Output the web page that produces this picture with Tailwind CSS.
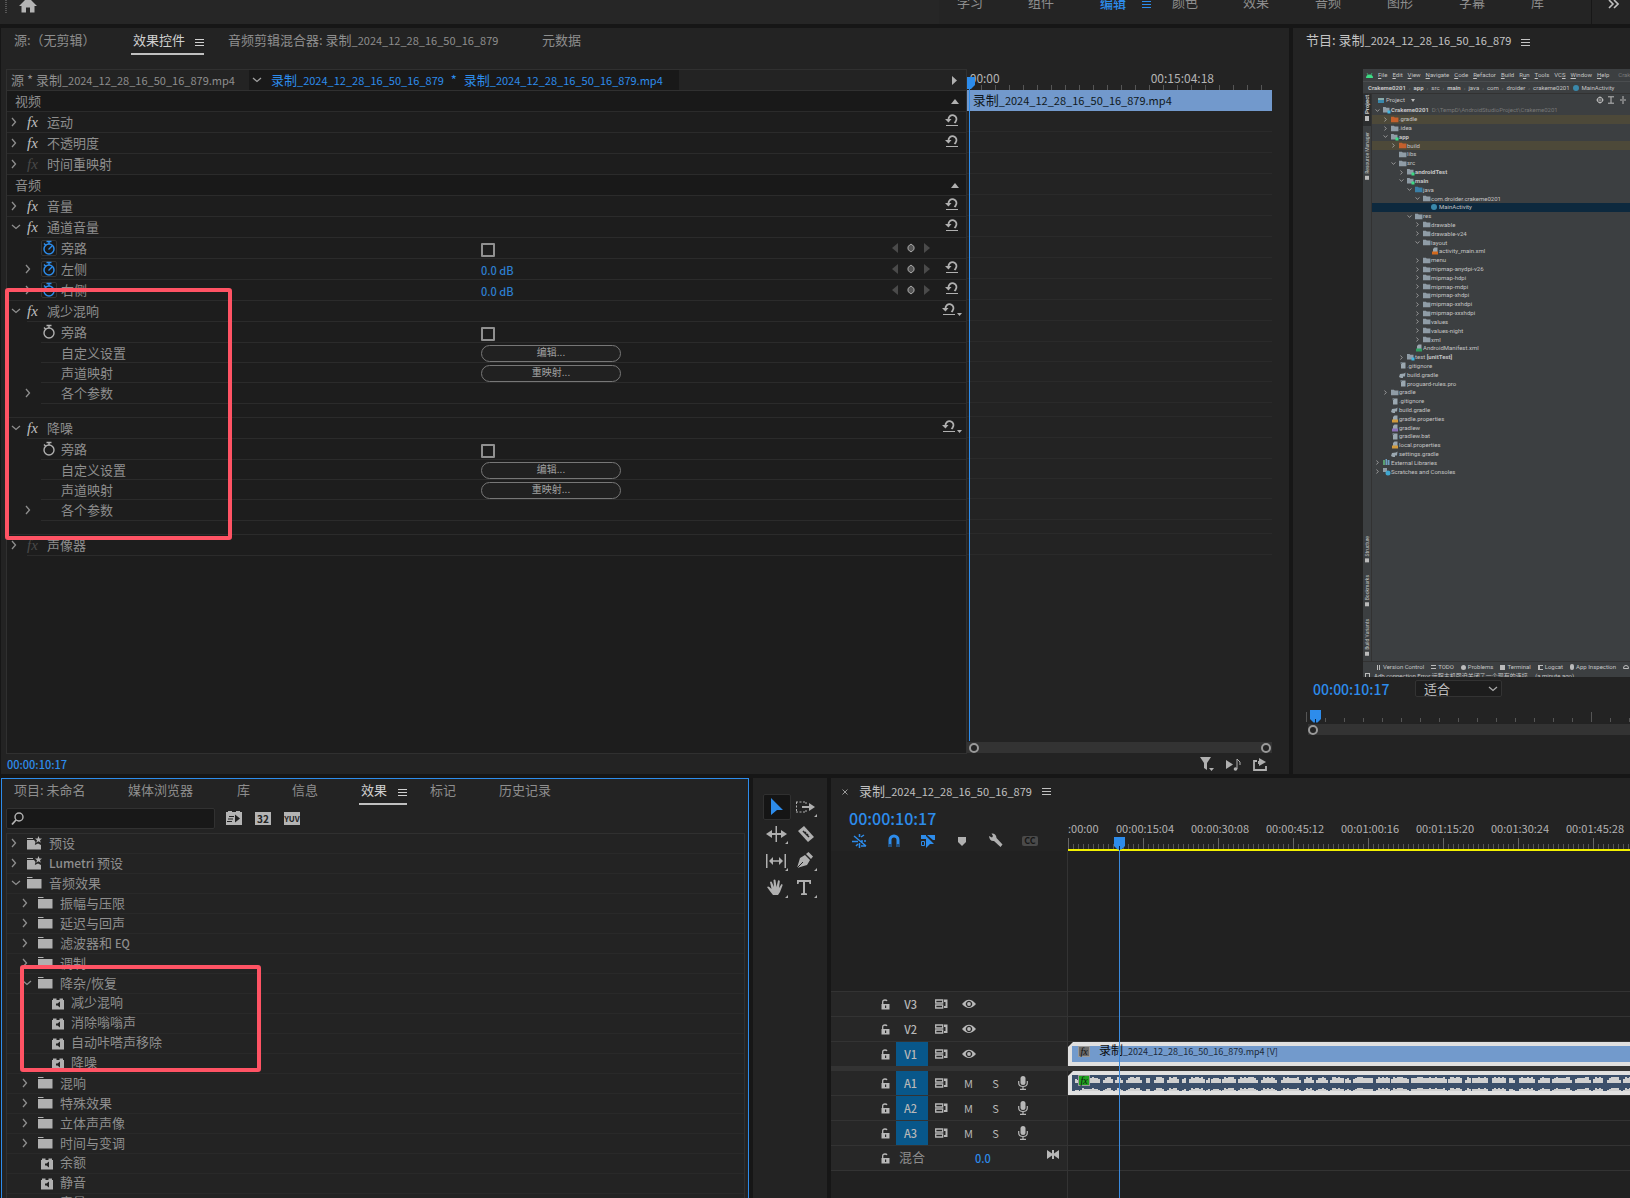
<!DOCTYPE html>
<html lang="zh-CN">
<head>
<meta charset="utf-8">
<title>录制_2024_12_28_16_50_16_879</title>
<script src="https://cdn.jsdelivr.net/npm/@tailwindcss/browser@4"></script>
</head>
<body class="h-screen overflow-hidden bg-[#161616] font-['Noto_Sans_CJK_SC',sans-serif] text-[13px] leading-[18px] text-[#8e8e8e]">
<svg class="hidden">
  <symbol id="menu" viewBox="0 0 9 9"><path d="M0 1.500h9M0 4.500h9M0 7.500h9" stroke="currentColor" fill="none"/></symbol>
  <symbol id="right" viewBox="0 0 8 10"><path d="M2 1l3.500 4L2 9" stroke="currentColor" stroke-width="1.300" fill="none"/></symbol>
  <symbol id="down" viewBox="0 0 10 8"><path d="M1 2l4 3.500L9 2" stroke="currentColor" stroke-width="1.300" fill="none"/></symbol>
  <symbol id="reset" viewBox="0 0 14 14"><path d="M3.500 6.500A4 4 0 1 1 10.500 8.800L9.500 10" stroke="currentColor" stroke-width="1.800" fill="none"/><path d="M0 6h6.500L3.500 9.500zM1 12h12v1H1z" fill="currentColor"/></symbol>
  <symbol id="watch" viewBox="0 0 14 16"><circle cx="7" cy="9" r="5" stroke="currentColor" stroke-width="1.400" fill="none"/><path d="M4.500 1.500h5M7 1.500V4M2 3.500l2 2" stroke="currentColor" stroke-width="1.400" fill="none"/></symbol>
  <symbol id="watchon" viewBox="0 0 14 16"><circle cx="7" cy="9" r="5" stroke="currentColor" stroke-width="1.500" fill="none"/><path d="M4.500 1.500h5M7 1.500V4M2 3.500l2 2M6.500 9.500l3.500-3.500" stroke="currentColor" stroke-width="1.400" fill="none"/></symbol>
  <symbol id="folder" viewBox="0 0 15 13"><path d="M0 1h5.500v1H0zM0 3h14.500v9.500H0z" fill="#b0b0b0"/></symbol>
  <symbol id="star" viewBox="0 0 15 14"><path d="M0 2h6v1H0zM0 4h7l1.500 2-.7 3L11 7.500 14 9v4.500H0z" fill="#b0b0b0"/><path d="M11.500 0l1 2.500h2.500l-2 1.700.8 2.600-2.300-1.500-2.300 1.500.8-2.600-2-1.700h2.500z" fill="#b0b0b0"/></symbol>
  <symbol id="plug" viewBox="0 0 12 12"><path d="M0 2h1V.5h3.500V2h3V.5H11V2h1v9.500H0z" fill="#b0b0b0"/><path d="M8 3.500v6L5.500 7.500H4v-2h1.500z" fill="#222"/></symbol>
  <symbol id="lock" viewBox="0 0 9 11"><path d="M1.700 5V3q0-2 2.300-2 1.500 0 2 1" stroke="currentColor" stroke-width="1.300" fill="none"/><path fill-rule="evenodd" d="M.5 5h8v5.500h-8zM4 6.500v2.500h1.200V6.500z" fill="currentColor"/></symbol>
  <symbol id="sync" viewBox="0 0 13 10"><path d="M.7 1h7v3h-7zM.7 6h7v3h-7z" stroke="currentColor" stroke-width="1.300" fill="none"/><path d="M9 .5h3.500v8.500H9V7h1.500V3H9z" fill="currentColor"/></symbol>
  <symbol id="eye" viewBox="0 0 14 10"><path fill-rule="evenodd" d="M0 5Q7-3.500 14 5 7 13 0 5zM7 1.800a3.200 3.200 0 1 0 .01 0z" fill="currentColor"/><circle cx="7" cy="5" r="1.900" fill="currentColor"/></symbol>
  <symbol id="mic" viewBox="0 0 10 14"><rect x="2.500" y="0" width="5" height="9" rx="2.500" fill="currentColor"/><path d="M.7 5v2q0 3.500 4.300 3.500T9.300 7V5M5 10v3M2 13.300h6" stroke="currentColor" stroke-width="1.200" fill="none"/></symbol>
  <symbol id="head" viewBox="0 0 11 13"><path d="M0 0h11v9l-3.500 3.500h-4L0 9z" fill="#2d8ceb"/><path d="M5 9h1v4H5z" fill="#0b1f38"/></symbol>
  <symbol id="ifolder" viewBox="0 0 7 6"><path d="M0 .5h2.500l.8.800H6.500V5.500H0z" fill="currentColor"/></symbol>
  <symbol id="ifile" viewBox="0 0 7 7"><path d="M3 .5h3v6H1.500V2z" fill="#9aa7b0"/><path d="M1 0l2.500 0L1 2.500z" fill="#6e7a83"/></symbol>
</svg>

<div class="grid h-full grid-cols-1 grid-rows-[24px_minmax(0,746fr)_minmax(0,420fr)] gap-1">

  <header class="flex items-start justify-between overflow-hidden bg-[#262626]">
    <div class="flex gap-3 pl-[5px]">
      <div class="h-[13px] w-[2px] bg-[repeating-linear-gradient(#555_0_1px,#262626_1px_2px)]"></div>
      <button aria-label="主页" class="h-[13px]"><svg width="18" height="13" viewBox="0 0 18 13" fill="#b4b4b4"><path d="M0 6L8-2h2l8 8h-2.500v6.500H11V7.500H7v5H2.500V6z"/></svg></button>
    </div>
    <nav class="flex h-6 bg-[#242424]">
      <div class="-mt-[7px] flex h-[19px] pl-[18px]">
        <a href="#" class="w-[71px]">学习</a>
        <a href="#" class="w-[72px]">组件</a>
        <a href="#" class="flex w-[72px] items-center gap-4 font-medium text-[#2d8ceb]">编辑<svg class="mt-1" width="9" height="9"><use href="#menu"/></svg></a>
        <a href="#" class="w-[71px]">颜色</a>
        <a href="#" class="w-[72px]">效果</a>
        <a href="#" class="w-[72px]">音频</a>
        <a href="#" class="w-[72px]">图形</a>
        <a href="#" class="w-[72px]">字幕</a>
        <a href="#" class="w-[60px]">库</a>
      </div>
      <button aria-label="更多工作区" class="flex w-[39px] items-start border-l border-[#171717] pl-4"><svg width="11" height="9" viewBox="0 0 11 9"><path d="M1 0l4 4-4 4M6 0l4 4-4 4" fill="none" stroke="#c0c0c0" stroke-width="1.600"/></svg></button>
    </nav>
  </header>

  <div class="flex min-h-0 min-w-0 gap-1 pl-px">
    <section class="flex min-w-0 flex-[1288] flex-col bg-[#232323]">
      <div class="flex h-[41px] shrink-0 pt-[3px] pl-[13px] text-[13px]">
        <div class="w-[117px]">源:（无剪辑）</div>
        <div class="mr-[24px] flex h-[24px] w-[73px] items-start justify-between border-b-2 border-[#c0c0c0] pl-[2px] text-[#d0d0d0]">效果控件<svg class="mt-[7px]" width="9" height="9"><use href="#menu"/></svg></div>
        <div class="w-[314px]">音频剪辑混合器: 录制<span class="text-[11px]">_2024_12_28_16_50_16_879</span></div>
        <div>元数据</div>
      </div>
      <div class="relative flex min-h-0 flex-1">
        <div class="ml-[5px] flex min-w-0 flex-[961] flex-col border border-[#303030] bg-[#1d1d1d]">
          <div class="flex h-[21px] shrink-0 items-center justify-between border-b border-[#303030] bg-[#232323] pr-2">
            <div class="flex h-full items-center">
              <span class="w-[242px] pl-1">源 * 录制<span class="text-[11px]">_2024_12_28_16_50_16_879.mp4</span></span>
              <div class="flex h-full w-[430px] items-center bg-[#191919] text-[#2d8ceb]"><svg class="mr-[9px] ml-[3px] text-[#a0a0a0]" width="10" height="8"><use href="#down"/></svg><span>录制<span class="text-[11px]">_2024_12_28_16_50_16_879</span><span class="mx-1"> * </span>录制<span class="text-[11px]">_2024_12_28_16_50_16_879.mp4</span></span></div>
            </div>
            <svg width="6" height="9"><path d="M0 0l5 4.500L0 9z" fill="#b0b0b0"/></svg>
          </div>
          <div id="effects"></div>
        </div>
        <div class="relative mr-[17px] flex min-w-0 flex-[306] flex-col">
          <div class="relative h-[21px] shrink-0 overflow-hidden text-[12px] leading-[18px] text-[#b4b4b4]">
            <div class="flex justify-between pr-[58px] pl-[3px]"><span>00:00</span><span>00:15:04:18</span></div>
            <div class="absolute inset-x-0 bottom-0 ml-[14px] h-[5px] bg-[repeating-linear-gradient(90deg,#555_0_1px,transparent_1px_14px)]"></div>
          </div>
          <div class="h-[21px] shrink-0 bg-[#7299cc] pl-[6px] leading-5 text-[#101820]">录制<span class="text-[11px]">_2024_12_28_16_50_16_879.mp4</span></div>
          <div id="lanes" class="flex-1"></div>
          <div class="mb-px flex h-[11px] shrink-0 items-center justify-between bg-[#333] pr-px pl-[2px]">
            <span class="size-[10px] rounded-full border-2 border-[#999] bg-[#232323]"></span><span class="size-[10px] rounded-full border-2 border-[#999] bg-[#232323]"></span>
          </div>
          <svg class="absolute top-[8px] left-0" width="8" height="13"><path d="M0 0h8v8l-4 4H0z" fill="#2d8ceb"/></svg>
          <div class="absolute top-[20px] bottom-[13px] left-[2px] w-px bg-[#2d8ceb]"></div>
        </div>
      </div>
      <footer class="flex h-[20px] shrink-0 items-center justify-between pr-[21px] pl-[6px]">
        <span class="text-[11px] font-medium text-[#2d8ceb]">00:00:10:17</span>
        <div class="flex items-center gap-3 text-[#b0b0b0]">
          <button aria-label="筛选"><svg width="14" height="14" viewBox="0 0 14 14" fill="currentColor"><path d="M0 0h11L7 6v7L4 11V6zM9 11h5l-2.500 3z"/></svg></button>
          <button aria-label="播放音频"><svg width="15" height="13" viewBox="0 0 15 13" fill="currentColor"><path d="M0 2l7 4.500L0 11z"/><path d="M11 11V1l3 3v3" fill="none" stroke="currentColor"/><circle cx="9.500" cy="11" r="1.800"/></svg></button>
          <button aria-label="导出"><svg width="15" height="13" viewBox="0 0 15 13" fill="currentColor"><path d="M4 3H1v9h12V8" fill="none" stroke="currentColor" stroke-width="1.800"/><path d="M6 0l7 4-7 4zM5 3h3v3H5z"/></svg></button>
        </div>
      </footer>
    </section>

    <section class="flex min-w-0 flex-[337] flex-col overflow-hidden bg-[#232323]">
      <div class="flex h-[41px] shrink-0 items-start gap-[10px] pt-[3px] pl-[13px] text-[#c4c4c4]"><span>节目: 录制<span class="text-[11px]">_2024_12_28_16_50_16_879</span></span><svg class="mt-[7px]" width="9" height="9"><use href="#menu"/></svg></div>
      <div class="ml-[70px] flex min-h-0 flex-1 flex-col overflow-hidden bg-[#3c3f41] font-[Roboto,'Noto_Sans_CJK_SC',sans-serif] text-[6px] leading-[8px] whitespace-nowrap text-[#c4c4c4]">
        <div class="flex h-[13px] shrink-0 items-center gap-[5px] border-b border-[#4a4d4f] pl-[3px]">
          <svg class="shrink-0" width="7" height="5" viewBox="0 0 7 5"><path d="M0 5Q0 1.500 3.500 1.500T7 5z" fill="#3ddc84"/><path d="M1 0l1 2M6 0L5 2" stroke="#3ddc84" stroke-width=".6"/></svg>
          <span><u>F</u>ile</span><span><u>E</u>dit</span><span><u>V</u>iew</span><span><u>N</u>avigate</span><span><u>C</u>ode</span><span><u>R</u>efactor</span><span><u>B</u>uild</span><span>R<u>u</u>n</span><span><u>T</u>ools</span><span>VC<u>S</u></span><span><u>W</u>indow</span><span><u>H</u>elp</span><span class="ml-1 text-[#777]">Crakeme0201</span>
        </div>
        <div class="flex h-[12px] shrink-0 items-center gap-[3px] border-b border-[#323232] pl-[5px]">
          <b>Crakeme0201</b><i class="text-[#777]">›</i><b>app</b><i class="text-[#777]">›</i><span>src</span><i class="text-[#777]">›</i><b>main</b><i class="text-[#777]">›</i><span>java</span><i class="text-[#777]">›</i><span>com</span><i class="text-[#777]">›</i><span>droider</span><i class="text-[#777]">›</i><span>crakeme0201</span><span class="size-[6px] shrink-0 rounded-full bg-[#3a88aa]"></span><span>MainActivity</span>
        </div>
        <div class="flex min-h-0 flex-1">
          <div class="flex w-[9px] shrink-0 flex-col items-center border-r border-[#323232] text-[5px]">
            <div class="flex h-[32px] w-full rotate-180 items-center gap-[2px] bg-[#2b2d2e] pt-[5px] text-[6px] [writing-mode:vertical-rl]"><span class="h-[5px] w-[4px] bg-[#bbb]"></span><b>Project</b></div>
            <div class="mt-[6px] flex rotate-180 items-center gap-[2px] [writing-mode:vertical-rl]"><span class="h-[4px] w-[4px] bg-[#bbb]"></span>Resource Manager</div>
            <div class="flex-1"></div>
            <div class="flex rotate-180 items-center gap-[2px] [writing-mode:vertical-rl]"><span class="size-[4px] bg-[#bbb]"></span>Structure</div>
            <div class="mt-[13px] flex rotate-180 items-center gap-[2px] [writing-mode:vertical-rl]"><span class="size-[4px] bg-[#bbb]"></span>Bookmarks</div>
            <div class="mt-[13px] mb-[5px] flex rotate-180 items-center gap-[2px] [writing-mode:vertical-rl]"><span class="size-[4px] bg-[#bbb]"></span>Build Variants</div>
          </div>
          <div class="flex min-w-0 flex-1 flex-col">
            <div class="flex h-[12px] shrink-0 items-center justify-between pr-[4px] pl-[6px]">
              <span class="flex items-center gap-[2px]"><span class="h-[5px] w-[6px] border-t-2 border-[#8aa] bg-[#3a88aa]"></span>Project<svg class="ml-[4px]" width="4" height="3"><path d="M0 0h4L2 3z" fill="#bbb"/></svg></span>
              <svg width="30" height="8" viewBox="0 0 30 8" fill="none" stroke="#bbb"><circle cx="4" cy="4" r="2.700"/><path d="M4 0v8M0 4h8" stroke-width=".6"/><path d="M12 .8h6M12 7.200h6M15 1v6M24 4h6M27 0v3M27 5v3"/></svg>
            </div>
            <div id="project" class="flex h-[370px] shrink-0 flex-col"></div>
          </div>
        </div>
        <div class="flex h-[11px] shrink-0 items-center gap-[7px] border-t border-[#323232] pl-[14px]">
          <span class="flex items-center gap-[3px]"><span class="h-[5px] w-[3px] border-x border-[#bbb]"></span>Version Control</span>
          <span class="flex items-center gap-[2px]"><span class="h-[4px] w-[5px] border-y border-[#bbb]"></span>TODO</span>
          <span class="flex items-center gap-[2px]"><span class="size-[5px] rounded-full bg-[#bbb]"></span>Problems</span>
          <span class="flex items-center gap-[2px]"><span class="size-[5px] bg-[#bbb]"></span>Terminal</span>
          <span class="flex items-center gap-[2px]"><span class="size-[5px] border-y border-l-2 border-[#bbb]"></span>Logcat</span>
          <span class="flex items-center gap-[2px]"><span class="h-[6px] w-[4px] rounded-full bg-[#bbb]"></span>App Inspection</span>
          <span class="flex items-center gap-[2px]"><span class="h-[4px] w-[6px] rounded-t-full border border-[#bbb]"></span>Profiler</span>
        </div>
        <div class="flex h-[5px] shrink-0 items-start gap-[4px] overflow-hidden pl-[2px]"><span class="mt-px size-[5px] shrink-0 border border-[#bbb]"></span>Adb connection Error:远程主机强迫关闭了一个现有的连接。 (a minute ago)</div>
      </div>
      <div class="flex h-[33px] shrink-0 items-start pt-[3px] pl-[20px]">
        <span class="w-[102px] text-[14px] font-medium text-[#2d8ceb]">00:00:10:17</span>
        <div class="relative">
          <select aria-label="缩放级别" class="block h-[17px] w-[87px] appearance-none rounded-[2px] border border-[#333] bg-[#1d1d1d] pl-2 text-[13px] leading-[14px] text-[#c0c0c0]"><option>适合</option></select>
          <svg class="pointer-events-none absolute top-[5px] right-[4px] text-[#aaa]" width="10" height="8"><use href="#down"/></svg>
        </div>
      </div>
      <div class="relative ml-[13px] h-[14px] shrink-0">
        <div class="absolute top-[8px] left-0 h-[4px] w-full bg-[repeating-linear-gradient(90deg,#555_0_1px,transparent_1px_19px)]"></div>
        <div class="absolute top-[2px] left-0 h-[10px] w-full bg-[repeating-linear-gradient(90deg,#555_0_1px,transparent_1px_285px)]"></div>
        <svg class="absolute top-0 left-[4px]" width="11" height="13"><use href="#head"/></svg>
      </div>
      <div class="mb-[39px] ml-[15px] flex h-[11px] shrink-0 items-center bg-[#333]"><span class="size-[10px] rounded-full border-2 border-[#999] bg-[#232323]"></span></div>
    </section>
  </div>

  <div class="flex min-h-0 min-w-0 gap-1 pl-px">
    <section class="flex min-w-0 flex-[747] flex-col overflow-hidden border border-b-0 border-[#2d8ceb] bg-[#232323]">
      <div class="flex h-[29px] shrink-0 pt-[2px] pl-[12px]">
        <div class="w-[114px]">项目: 未命名</div>
        <div class="w-[109px]">媒体浏览器</div>
        <div class="w-[55px]">库</div>
        <div class="w-[67px]">信息</div>
        <div class="mr-[23px] flex h-[24px] w-[48px] items-start justify-between border-b-2 border-[#c0c0c0] pl-[2px] text-[#d0d0d0]">效果<svg class="mt-[7px]" width="9" height="9"><use href="#menu"/></svg></div>
        <div class="w-[69px]">标记</div>
        <div>历史记录</div>
      </div>
      <div class="flex h-[25px] shrink-0 items-start gap-[13px] pl-[4px]">
        <label class="-mr-[2px] flex h-[21px] w-[209px] items-center rounded-[2px] border border-[#313131] bg-[#181818] pl-1">
          <svg width="14" height="14" viewBox="0 0 14 14"><circle cx="8" cy="5" r="4" fill="none" stroke="#b4b4b4" stroke-width="1.400"/><path d="M5 8l-4 4.500" stroke="#b4b4b4" stroke-width="1.800"/></svg>
          <input aria-label="搜索效果" class="min-w-0 flex-1 bg-transparent outline-none">
        </label>
        <button aria-label="加速效果" class="mt-[2px]"><svg width="16" height="15" viewBox="0 0 16 15"><path d="M0 2h2V1h4v1h4V1h4v1h2v13H0z" fill="#b4b4b4"/><path d="M9 4.500l5 4-5 4zM3 6h5v1H3zM2 8.500h5v1H2zM1 11h5v1H1z" fill="#222"/></svg></button>
        <button class="mt-[4px] h-[13px] w-[16px] bg-[#b4b4b4] text-center text-[10px] leading-[13px] font-bold text-[#222]">32</button>
        <button class="mt-[4px] h-[13px] w-[16px] bg-[#b4b4b4] text-center text-[8px] leading-[13px] font-bold text-[#222]">YUV</button>
      </div>
      <div id="bin" class="mr-[3px] ml-[4px] min-h-0 flex-1 overflow-hidden border border-b-0 border-[#303030]"></div>
    </section>

    <section class="w-[74px] shrink-0 bg-[#232323]">
      <div class="grid grid-cols-[29px_29px] auto-rows-[27px] items-center justify-items-center pt-[15px] pl-[9px] text-[#b0b0b0]">
        <button aria-label="选择工具" class="grid h-[26px] w-[28px] place-items-center rounded-[2px] border border-[#303030] bg-[#151515]"><svg width="14" height="18" viewBox="0 0 14 18"><path d="M1 0l12 12H7l-6 5z" fill="#2d8ceb"/></svg></button>
        <button aria-label="向前选择轨道工具"><svg width="22" height="20" viewBox="0 0 22 20" fill="currentColor"><path d="M1 5h10M1 15h10M1.500 5v10M11 5v3M11 13v2" fill="none" stroke="currentColor" stroke-dasharray="2 1.500"/><path d="M7 9h7V6l6 4-6 4v-3H7zM22 17v3h-3z"/></svg></button>
        <button aria-label="波纹编辑工具"><svg width="22" height="20" viewBox="0 0 22 20" fill="currentColor"><path d="M9.500 2h1.500v16H9.500zM0 10l6-4v3h9V6l6 4-6 4v-3H6v3zM22 17v3h-3z"/></svg></button>
        <button aria-label="剃刀工具"><svg width="20" height="20" viewBox="0 0 20 20"><path d="M2 7l6-5 10 11-6 5z" fill="currentColor"/><path d="M7 7l6 6M10 8l-1 1M12 10l-1 1" stroke="#232323" stroke-width="1.500"/></svg></button>
        <button aria-label="外滑工具"><svg width="22" height="20" viewBox="0 0 22 20" fill="currentColor"><path d="M0 3h1.500v14H0zM18.500 3H20v14h-1.500zM3 10l4-4v3.300h6V6l4 4-4 4v-3.300H7V14zM22 17v3h-3z"/></svg></button>
        <button aria-label="钢笔工具"><svg width="22" height="20" viewBox="0 0 22 20" fill="currentColor"><path d="M2 17l3-10 5-3 5 5-3 5zM11 3l2.500-2L18 5.500 16 8zM22 17v3h-3z"/><path d="M2 17l6-6" stroke="#232323"/></svg></button>
        <button aria-label="手形工具"><svg width="22" height="20" viewBox="0 0 22 20" fill="currentColor"><path d="M7 17Q3 12 1 9q1.500-1.500 3.500 1L5.500 11 4 4q1.500-1 2 .5L8 9 7.500 2q1.500-1 2 .3L10.500 9 12 2.500q1.500-.6 1.800.7L13 10l2.500-4q1.500 0 1 1.500L14 14l-2 3zM22 17v3h-3z"/></svg></button>
        <button aria-label="文字工具"><svg width="22" height="20" viewBox="0 0 22 20" fill="currentColor"><path d="M2 2h14v4h-1.500l-.5-2h-4v11l2 .5V17H6v-1.500l2-.5V4H4l-.5 2H2zM22 17v3h-3z"/></svg></button>
      </div>
    </section>

    <section class="relative flex min-w-0 flex-[800] flex-col overflow-hidden bg-[#232323]">
      <div class="flex h-[27px] shrink-0 items-center pb-[2px] pl-[11px] text-[#c0c0c0]">
        <button aria-label="关闭" class="mt-[2px] w-[17px]"><svg width="6" height="6"><path d="M.5.5l5 5M5.500.5l-5 5" stroke="#999"/></svg></button>
        <span class="mr-[10px]">录制<span class="text-[11px]">_2024_12_28_16_50_16_879</span></span><svg class="mt-[2px]" width="9" height="9"><use href="#menu"/></svg>
      </div>
      <div class="flex h-[46px] shrink-0">
        <div class="w-[237px] shrink-0 pt-[4px] pl-[18px]">
          <div class="text-[16px] font-medium text-[#2d8ceb]">00:00:10:17</div>
          <div class="mt-[6px] ml-[3px] grid grid-cols-[repeat(6,34px)] text-[#b0b0b0]">
            <button aria-label="嵌套" class="text-[#2d8ceb]"><svg width="16" height="16" viewBox="0 0 16 16" fill="none" stroke="currentColor" stroke-width="1.500"><path d="M7.500 1v3M2 3l12 10M0 8.500h6M4 13l2-2M7.500 10v5M9 8h2M12 8h2M9 13h5M9 4l3-2"/></svg></button>
            <button aria-label="对齐" class="pl-px text-[#2d8ceb]"><svg width="14" height="16" viewBox="0 0 14 16"><path d="M3 14V7a4 4 0 0 1 8 0v7" fill="none" stroke="currentColor" stroke-width="3"/><path d="M1 11h4v3H1zM9 11h4v3H9z" fill="#24507d"/></svg></button>
            <button aria-label="链接选择项" class="text-[#2d8ceb]"><svg width="16" height="16" viewBox="0 0 16 16" fill="currentColor"><path d="M1 2h5v4H1zM7 2h8v5h-2L7 2zM6 3l8 8h-4l-4 4z"/><path d="M1.500 8.500h3v4h-3z" fill="none" stroke="currentColor"/></svg></button>
            <button aria-label="添加标记" class="pl-[4px]"><svg width="8" height="16" viewBox="0 0 8 16" fill="currentColor"><path d="M0 4h8v5l-4 4-4-4z"/></svg></button>
            <button aria-label="时间轴设置"><svg width="16" height="16" viewBox="0 0 16 16"><path d="M1 3l3 1.500L5 3 3.500.5Q8 0 8.500 5l6 6.500-2 2.500L6 8Q1.500 8.500 1 3z" fill="currentColor"/></svg></button>
            <button aria-label="字幕" class="flex h-4 items-center"><span class="h-[10px] w-[16px] rounded-[2px] bg-[#4a4a4a] text-center text-[9px] leading-[10px] font-bold text-[#161616]">CC</span></button>
          </div>
        </div>
        <div class="relative min-w-0 flex-1 overflow-hidden border-b-2 border-[#f2f000]">
          <div id="marks" class="relative mt-[14px] h-[18px] text-[11px] text-[#b4b4b4]"></div>
          <div class="absolute bottom-0 left-0 h-[5px] w-full bg-[repeating-linear-gradient(90deg,#555_0_1px,transparent_1px_5px)]"></div>
          <div class="absolute bottom-0 left-0 h-[11px] w-full bg-[repeating-linear-gradient(90deg,#666_0_1px,transparent_1px_75px)]"></div>
        </div>
      </div>
      <div id="tracks" class="flex min-h-0 flex-1 flex-col bg-[#212121]"></div>
      <div class="absolute top-[59px] bottom-0 left-[283px] w-[11px]"><svg width="11" height="13"><use href="#head"/></svg><div class="ml-[5px] h-full w-px bg-[#3a8ade]"></div></div>
    </section>
  </div>
</div>

<div class="pointer-events-none absolute top-[288px] left-[5px] h-[252px] w-[227px] rounded-[3px] border-4 border-[#ff5364]"></div>
<div class="pointer-events-none absolute top-[965px] left-[20px] h-[107px] w-[241px] rounded-[3px] border-4 border-[#ff5364]"></div>

<script>
const icon = (id, w, h, cls = '') => `<svg class="shrink-0 ${cls}" width="${w}" height="${h}"><use href="#${id}"/></svg>`;

/* Effect controls: [kind, label, option] */
const effects = [
  ['section', '视频'], ['fx', '运动', 'reset'], ['fx', '不透明度', 'reset'], ['fx', '时间重映射', 'off'],
  ['section', '音频'], ['fx', '音量', 'reset'], ['open', '通道音量', 'reset'],
  ['check', '旁路', 'on'], ['level', '左侧'], ['level', '右侧'],
  ['open', '减少混响', 'preset'], ['check', '旁路', ''], ['button', '自定义设置', '编辑...'], ['button', '声道映射', '重映射...'], ['more', '各个参数'], ['gap'],
  ['open', '降噪', 'preset'], ['check', '旁路', ''], ['button', '自定义设置', '编辑...'], ['button', '声道映射', '重映射...'], ['more', '各个参数'], ['gap'],
  ['fx', '声像器', 'off']
];
const nav = `<span class="mr-[15px] flex items-center gap-[9px]"><svg width="6" height="10"><path d="M6 0v10L0 5z" fill="#4a4a4a"/></svg><svg width="8" height="10"><path d="M4 1l3 2.500v3L4 9 1 6.500v-3z" fill="#555" stroke="#aaa"/></svg><svg width="6" height="10"><path d="M0 0v10l6-5z" fill="#4a4a4a"/></svg></span>`;
const reset = `<button aria-label="重置" class="mr-[7px] mb-[4px]">${icon('reset', 14, 14, 'text-[#b0b0b0]')}</button>`;
document.getElementById('effects').innerHTML = effects.map(([kind, label, opt], i) => {
  const line = '<div class="h-px bg-[#2b2b2b] ';
  if (kind === 'gap') return `<div class="h-[13px]"></div>${line}"></div>`;
  if (kind === 'section') return `<div class="flex h-5 items-center justify-between bg-[#191919] pr-[7px] pl-2">${label}<svg width="8" height="5"><path d="M0 5l4-5 4 5z" fill="#b0b0b0"/></svg></div>${line}"></div>`;
  if (kind === 'fx' || kind === 'open') {
    const arrow = kind === 'open' ? icon('down', 10, 8, 'mr-[6px] ml-[4px]') : icon('right', 8, 10, 'mr-[9px] ml-[3px]');
    const tone = opt === 'off' ? 'text-[#4a4a4a]' : 'text-[#c0c0c0]';
    const end = opt === 'reset' ? reset : opt === 'preset' ? `<button aria-label="预设" class="mr-[4px] mb-[5px] flex items-end">${icon('reset', 14, 14, 'text-[#b0b0b0]')}<svg class="ml-px" width="5" height="3"><path d="M0 0h5L2.500 3z" fill="#b0b0b0"/></svg></button>` : '';
    const inset = kind === 'open' || label === '声像器' ? 'ml-[20px]' : '';
    return `<div class="flex h-5 items-center justify-between"><span class="flex items-center">${arrow}<i class="w-[16px] font-['Liberation_Serif',serif] text-[15px] ${tone}">fx</i><span class="ml-[4px]">${label}</span></span>${end}</div>${line}${inset}"></div>`;
  }
  const inset = effects[i + 1][1] === '减少混响' ? '' : 'ml-[34px]';
  if (kind === 'check') {
    const watch = opt ? `<span class="flex size-[16px] items-center justify-center rounded-[2px] border border-[#333] bg-[#191919] text-[#2d8ceb]">${icon('watchon', 14, 16)}</span>` : `<span class="flex size-[16px] items-center justify-center text-[#b0b0b0]">${icon('watch', 14, 16)}</span>`;
    return `<div class="flex h-5 items-center"><label for="bypass${i}" class="flex w-[474px] items-center gap-1 pl-[34px]">${watch}${label}</label><input id="bypass${i}" type="checkbox" class="mt-[3px] size-[14px] appearance-none rounded-[1px] border-2 border-[#909090]"><span class="mr-[21px] ml-auto">${opt ? nav : ''}</span></div>${line}${inset}"></div>`;
  }
  if (kind === 'level') return `<div class="flex h-5 items-center"><span class="flex w-[474px] items-center pl-[17px]">${icon('right', 8, 10, 'mr-[9px]')}<span class="mr-1 flex size-[16px] items-center justify-center rounded-[2px] border border-[#333] bg-[#191919] text-[#2d8ceb]">${icon('watchon', 14, 16)}</span>${label}</span><span class="pt-[2px] text-[11px] font-medium text-[#2d7fd0]">0.0 dB</span><span class="ml-auto flex items-center">${nav}${reset}</span></div>${line}${inset}"></div>`;
  if (kind === 'button') return `<div class="flex h-[19px] items-center"><span class="w-[474px] pl-[54px]">${label}</span><button class="mt-[2px] h-[17px] w-[140px] rounded-full border border-[#777] bg-[#212121] pb-[4px] text-[10px] leading-[11px] text-[#a0a0a0]">${opt}</button></div>${line}${inset}"></div>`;
  return `<div class="flex h-5 items-center">${icon('right', 8, 10, 'ml-[17px]')}<span class="ml-[29px]">${label}</span></div>${line}${inset}"></div>`;
}).join('');

/* Keyframe lanes that continue the effect rows */
document.getElementById('lanes').innerHTML = effects.map(([kind]) =>
  kind === 'gap' ? '<div class="h-[14px] border-b border-[#2a2a2a]"></div>' :
  kind === 'button' ? '<div class="h-[20px] border-b border-[#2a2a2a]"></div>' :
  '<div class="h-[21px] border-b border-[#2a2a2a]"></div>').slice(1).join('');

/* Effects bin: [level, icon, open, label] */
const bin = [
  [0, 'star', 0, '预设'], [0, 'star', 0, '<span class="text-[12px] font-medium">Lumetri</span> 预设'], [0, 'folder', 1, '音频效果'],
  [1, 'folder', 0, '振幅与压限'], [1, 'folder', 0, '延迟与回声'], [1, 'folder', 0, '滤波器和 <span class="text-[11px] font-medium">EQ</span>'], [1, 'folder', 0, '调制'], [1, 'folder', 1, '降杂/恢复'],
  [2, 'plug', 0, '减少混响'], [2, 'plug', 0, '消除嗡嗡声'], [2, 'plug', 0, '自动咔嗒声移除'], [2, 'plug', 0, '降噪'],
  [1, 'folder', 0, '混响'], [1, 'folder', 0, '特殊效果'], [1, 'folder', 0, '立体声声像'], [1, 'folder', 0, '时间与变调'],
  [1, 'plug', 0, '余额'], [1, 'plug', 0, '静音'], [1, 'plug', 0, '音量']
];
const pad = ['pl-[3px]', 'pl-[14px]', 'pl-[25px]'];
document.getElementById('bin').innerHTML = bin.map(([level, ic, open, label]) => {
  const leaf = ic === 'plug';
  const arrow = leaf ? '<span class="w-[20px]"></span>' : `<span class="flex w-[17px] ${open ? 'pl-[1px]' : ''}">${open ? icon('down', 10, 8) : icon('right', 8, 10)}</span>`;
  return `<div class="flex h-5 items-center border-b border-[#292929] ${leaf ? '' : 'pb-[2px]'} ${pad[level]}">${arrow}${leaf ? icon('plug', 12, 12) : icon(ic, 15, ic === 'star' ? 14 : 13)}<span class="ml-[7px] ${leaf ? 'pb-[4px]' : ''}">${label}</span></div>`;
}).join('');

/* Project tree: [level, arrow, icon, label, bold] */
const tree = [
  [0, 'd', 'm', 'Crakeme0201', 1], [1, 'r', 'o', '.gradle'], [1, 'r', 'f', '.idea'], [1, 'd', 'g', 'app', 1], [2, 'r', 'o', 'build'], [2, '', 'f', 'libs'], [2, 'd', 'f', 'src'],
  [3, 'r', 'g', 'androidTest', 1], [3, 'd', 'g', 'main', 1], [4, 'd', 'b', 'java'], [5, 'd', 'f', 'com.droider.crakeme0201'], [6, '', 'c', 'MainActivity'],
  [4, 'd', 'f', 'res'], [5, 'r', 'f', 'drawable'], [5, 'r', 'f', 'drawable-v24'], [5, 'd', 'f', 'layout'], [6, '', 'x', 'activity_main.xml'], [5, 'r', 'f', 'menu'],
  [5, 'r', 'f', 'mipmap-anydpi-v26'], [5, 'r', 'f', 'mipmap-hdpi'], [5, 'r', 'f', 'mipmap-mdpi'], [5, 'r', 'f', 'mipmap-xhdpi'], [5, 'r', 'f', 'mipmap-xxhdpi'], [5, 'r', 'f', 'mipmap-xxxhdpi'],
  [5, 'r', 'f', 'values'], [5, 'r', 'f', 'values-night'], [5, 'r', 'f', 'xml'], [4, '', 'n', 'AndroidManifest.xml'], [3, 'r', 'm', 'test <b>[unitTest]</b>'],
  [2, '', 'p', '.gitignore'], [2, '', 'e', 'build.gradle'], [2, '', 'p', 'proguard-rules.pro'], [1, 'r', 'f', 'gradle'], [1, '', 'p', '.gitignore'], [1, '', 'e', 'build.gradle'],
  [1, '', 'y', 'gradle.properties'], [1, '', 'w', 'gradlew'], [1, '', 'p', 'gradlew.bat'], [1, '', 'y', 'local.properties'], [1, '', 'e', 'settings.gradle'],
  [0, 'r', 'l', 'External Libraries'], [0, 'r', 's', 'Scratches and Consoles']
];
const dot = c => `<svg class="shrink-0" width="8" height="8" viewBox="0 0 8 8"><path d="M0 1h2.500l.8.800H6.500V6.500H0z" fill="#8f9ca6"/><path d="M4.500 4.500h3v3h-3z" fill="${c}"/></svg>`;
const file = c => `<svg class="shrink-0" width="8" height="8" viewBox="0 0 8 8"><path d="M3.500.5h3v6H2V2z" fill="#9aa7b0"/><path d="M1 4.500h6v3H1z" fill="${c}"/></svg>`;
const glyphs = {
  f: icon('ifolder', 8, 7, 'text-[#8f9ca6]'), o: icon('ifolder', 8, 7, 'text-[#c3602c]'), b: icon('ifolder', 8, 7, 'text-[#3a7fa6]'),
  m: dot('#40b6e0'), g: dot('#3ddc84'), x: file('#d2691e'), n: file('#2f9e60'), y: file('#d09a3c'), w: file('#8a70b8'), p: icon('ifile', 8, 7),
  c: '<span class="mr-[2px] size-[6px] shrink-0 rounded-full bg-[#3a88aa]"></span>',
  e: '<svg class="shrink-0" width="8" height="6"><path d="M0 5l1-3 4-.5L6.500.5 6 4.500H4V6H2z" fill="#9aa7b0"/></svg>',
  l: '<svg class="shrink-0" width="8" height="7"><path d="M0 1h2v5H0z" fill="#5a9e6f"/><path d="M2.500 0h1.500v6H2.500zM4.500 1h2v5h-2z" fill="#6f9fc0"/></svg>',
  s: '<svg class="shrink-0" width="8" height="8"><path d="M0 0h4v4H0z" fill="#8f9ca6"/><circle cx="5" cy="5" r="2.500" fill="#40a6d0"/></svg>'
};
const indent = ['pl-[3px]', 'pl-[11px]', 'pl-[19px]', 'pl-[27px]', 'pl-[35px]', 'pl-[43px]', 'pl-[51px]'];
document.getElementById('project').innerHTML = tree.map(([level, arrow, ic, label, bold]) => {
  const bg = ic === 'o' ? 'bg-[#4d4939]' : label === 'MainActivity' ? 'bg-[#0d293e]' : '';
  const mark = arrow ? icon(arrow === 'r' ? 'right' : 'down', 5, 5, 'mr-[2px]') : '';
  return `<div class="flex min-h-0 flex-1 items-center ${indent[level]} ${bg}"><span class="flex w-[8px] shrink-0">${mark}</span>${glyphs[ic]}<span class="${bold ? 'font-bold' : ''}">${label}</span>${level ? '' : arrow === 'd' ? '<span class="ml-[3px] text-[#777]">D:\\TempD\\AndroidStudioProject\\Crakeme0201</span>' : ''}</div>`;
}).join('');

/* Ruler captions, centred on every major tick */
document.getElementById('marks').innerHTML = '<span class="absolute left-0">:00:00</span>' +
  ['00:00:15:04', '00:00:30:08', '00:00:45:12', '00:01:00:16', '00:01:15:20', '00:01:30:24', '00:01:45:28']
    .map((t, i) => `<span class="absolute w-[60px] text-center" style="left:${(i + 1) * 75 - 28}px">${t}</span>`).join('');

/* Audio waveform */
let seed = 11;
const rnd = () => (seed = (seed * 16807) % 2147483647) / 2147483647;
let up = '', low = '', x = 3;
while (x < 1200) {
  const run = 4 + Math.floor(rnd() * 18);
  for (let k = 0; k < run; k += 2) {
    const edge = k === 0 || k + 2 >= run;
    const h = edge ? 3 + Math.floor(rnd() * 3) : 5 + Math.floor(rnd() * 2);
    const l = Math.max(1, h - 3);
    up += `M${x + k} 8v-${h}h2v${h}z`;
    low += `M${x + k} 16v-${l}h2v${l}z`;
  }
  x += run + 1 + Math.floor(rnd() * 4);
}
const badge = c => `<span class="grid h-[11px] w-[12px] shrink-0 place-items-center border border-[#999] font-['Liberation_Serif',serif] text-[10px] leading-[9px] text-[#111] italic ${c}">fx</span>`;
const corner = '<svg class="absolute top-0 left-0" width="6" height="6"><path d="M0 0h5L0 5z" fill="#222"/></svg>';
const clipV = `<div class="relative h-full bg-[#e0e0e0] py-1 pl-1">${corner}<div class="flex h-4 items-start gap-[9px] bg-[#729acc] pl-[6px] text-[9px] leading-[7px] text-[#1c2a3a]">${badge('bg-[#6a6a6a]')}<span><span class="text-[12px] text-[#0a0a0a]">录制</span>_2024_12_28_16_50_16_879.mp4 [V]</span></div></div>`;
const clipA = `<div class="relative h-full bg-[#e0e0e0] py-1 pl-1">${corner}<div class="relative h-4 overflow-hidden bg-[#3b4f6a]"><svg width="1200" height="16" fill="#d0d0d0"><path d="${up}${low}"/></svg><div class="absolute top-0 left-[6px] flex">${badge('bg-[#1fa31f]')}</div></div></div>`;
const track = (name, on, lane, size) => {
  const audio = name[0] === 'A';
  const ctl = audio
    ? `<button class="w-[27px]">M</button><button class="w-[27px]">S</button><button aria-label="录音" class="flex w-[27px] justify-center">${icon('mic', 10, 14)}</button>`
    : `<button aria-label="显示" class="flex w-[27px] justify-center">${icon('eye', 14, 10)}</button>`;
  return `<div class="flex shrink-0 ${size}"><div class="flex w-[237px] shrink-0 items-center border-r border-[#333] bg-[#272727] text-[11px] text-[#b8b8b8]">
    <button aria-label="锁定 ${name}" class="ml-[50px] w-[15px]">${icon('lock', 9, 11)}</button>
    <button class="h-full w-[32px] pr-[3px] pb-px font-medium ${on ? 'bg-[#08578a]' : ''}">${name}</button>
    <button aria-label="同步 ${name}" class="flex w-[27px] justify-center">${icon('sync', 13, 10)}</button>${ctl}</div><div class="min-w-0 flex-1 overflow-hidden">${lane}</div></div>`;
};
const row = 'h-[25px] border-b border-[#333]';
document.getElementById('tracks').innerHTML =
  '<div class="flex h-[141px] shrink-0 border-b border-[#333]"><div class="w-[237px] border-r border-[#333]"></div></div>' +
  track('V3', 0, '', row) + track('V2', 0, '', row) + track('V1', 1, clipV, 'h-[24px]') +
  '<div class="h-[5px] shrink-0 bg-[#333]"></div>' +
  track('A1', 1, clipA, row) + track('A2', 1, '', row) + track('A3', 1, '', row) +
  `<div class="flex h-[25px] shrink-0 border-b border-[#333]"><div class="flex w-[237px] items-center border-r border-[#333] bg-[#272727]"><button aria-label="锁定混合" class="ml-[50px] w-[18px] text-[#b8b8b8]">${icon('lock', 9, 11)}</button><span class="w-[76px] pb-[3px]">混合</span><span class="w-[72px] text-[11px] font-medium text-[#2d8ceb]">0.0</span><svg class="mb-[8px]" width="12" height="9"><path d="M0 0l5 3.500V0h2v3.500L12 0v9L7 5.500V9H5V5.500L0 9z" fill="#b8b8b8"/></svg></div></div>` +
  '<div class="flex flex-1"><div class="w-[237px] border-r border-[#333]"></div></div>';
</script>
</body>
</html>
